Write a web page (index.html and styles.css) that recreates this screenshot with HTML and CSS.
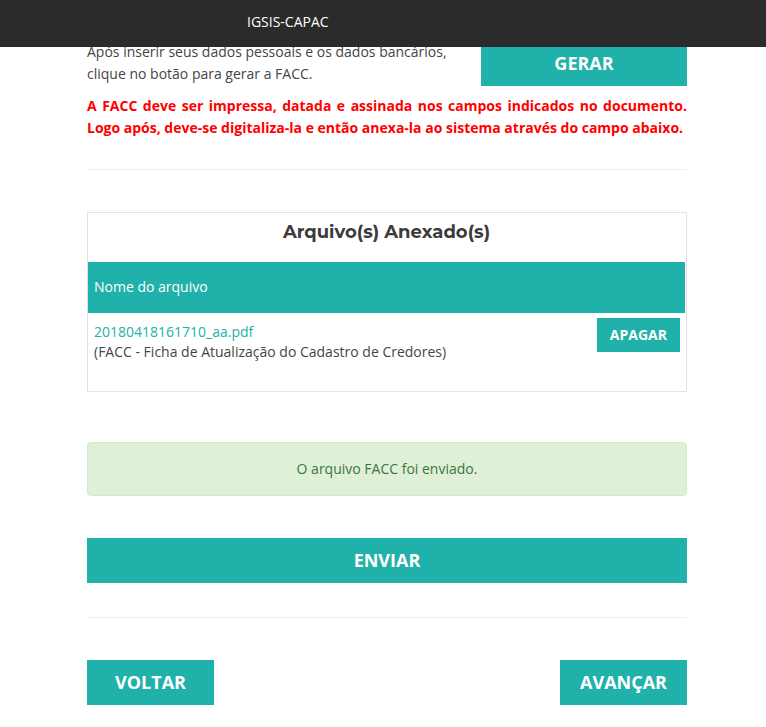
FILE: index.html
```html
<!DOCTYPE html>
<html lang="pt-BR">
<head>
<meta charset="utf-8">
<meta name="viewport" content="width=device-width, initial-scale=1">
<title>IGSIS-CAPAC</title>
<link rel="stylesheet" href="styles.css">
</head>
<body>
<header class="topbar"><a class="brand" href="#">IGSIS-CAPAC</a></header>
<main class="content">
  <section class="generate">
    <p class="intro">Após inserir seus dados pessoais e os dados bancários, clique no botão para gerar a FACC.</p>
    <button class="btn btn-large" type="button">GERAR</button>
  </section>
  <p class="warning">A FACC deve ser impressa, datada e assinada nos campos indicados no documento. Logo após, deve-se digitaliza-la e então anexa-la ao sistema através do campo abaixo.</p>
  <hr class="divider">
  <section class="files">
    <h2 class="files-title">Arquivo(s) Anexado(s)</h2>
    <table class="files-table">
      <thead>
        <tr><th scope="col">Nome do arquivo</th><th class="action-cell"></th></tr>
      </thead>
      <tbody>
        <tr>
          <td class="file-cell"><a class="file-link" href="#">20180418161710_aa.pdf</a><br>(FACC - Ficha de Atualização do Cadastro de Credores)</td>
          <td class="action-cell"><button class="btn btn-small" type="button">APAGAR</button></td>
        </tr>
      </tbody>
    </table>
  </section>
  <p class="alert" role="status">O arquivo FACC foi enviado.</p>
  <button class="btn btn-large btn-block" type="submit">ENVIAR</button>
  <hr class="divider">
  <nav class="pager">
    <button class="btn btn-large btn-nav" type="button">VOLTAR</button>
    <button class="btn btn-large btn-nav" type="button">AVANÇAR</button>
  </nav>
</main>
</body>
</html>
```
FILE: styles.css
```css
* {
  box-sizing: border-box;
}

body {
  margin: 0;
  background: #fff;
  color: #454545;
  font: 400 14px/22px "Open Sans", "Noto Sans", sans-serif;
}

.topbar {
  position: fixed;
  top: 0;
  left: 0;
  right: 0;
  padding: 11px 0 14px 247px;
  background: #2b2b2b;
}

.brand {
  display: block;
  color: #fff;
  text-decoration: none;
}

.content {
  padding: 41px 79px 22px 87px;
}

.generate {
  display: grid;
  grid-template-columns: 1fr 206px;
  column-gap: 30px;
}

.intro {
  margin: 0;
}

.warning {
  margin: 9px 0 0;
  color: #f00;
  font-weight: 700;
  text-align: justify;
}

.divider {
  margin: 30px 0 42px;
  border: 0;
  border-top: 1px solid #eee;
}

.btn {
  margin: 0;
  border: 0;
  background: #20b2aa;
  color: #fff;
  font-family: inherit;
  font-weight: 700;
  text-align: center;
  cursor: pointer;
}

.btn-large {
  padding: 10px 20px;
  font-size: 18px;
  line-height: 25px;
}

.btn-small {
  padding: 6px 13px;
  font-size: 14px;
  line-height: 22px;
}

.btn-block {
  display: block;
  width: 100%;
}

.files {
  padding: 8px 1px 24px 0;
  border: 1px solid #e4e4df;
}

.files-title {
  margin: 0 0 19px;
  font: 700 18px/22px Montserrat, Inter, sans-serif;
  color: #3b3b3b;
  text-align: center;
}

.files-table {
  width: 100%;
  border-collapse: collapse;
}

.files-table th {
  height: 51px;
  padding: 0 6px 2px;
  background: #20b2aa;
  color: #fff;
  font-weight: 400;
  text-align: left;
}

.files-table td {
  padding: 5px;
  vertical-align: top;
}

.files-table .file-cell {
  padding: 9px 6px 5px;
  line-height: 20px;
}

.files-table .action-cell {
  width: 100px;
  text-align: right;
}

.file-link {
  color: #20b2aa;
  text-decoration: none;
}

.alert {
  margin: 50px 0 42px;
  padding: 15px;
  border: 1px solid #d6e9c6;
  border-radius: 4px;
  background: #dff0d8;
  color: #3c763d;
  text-align: center;
}

.btn-block + .divider {
  margin-top: 34px;
}

.pager {
  display: flex;
  justify-content: space-between;
}

.btn-nav {
  min-width: 127px;
}
```
